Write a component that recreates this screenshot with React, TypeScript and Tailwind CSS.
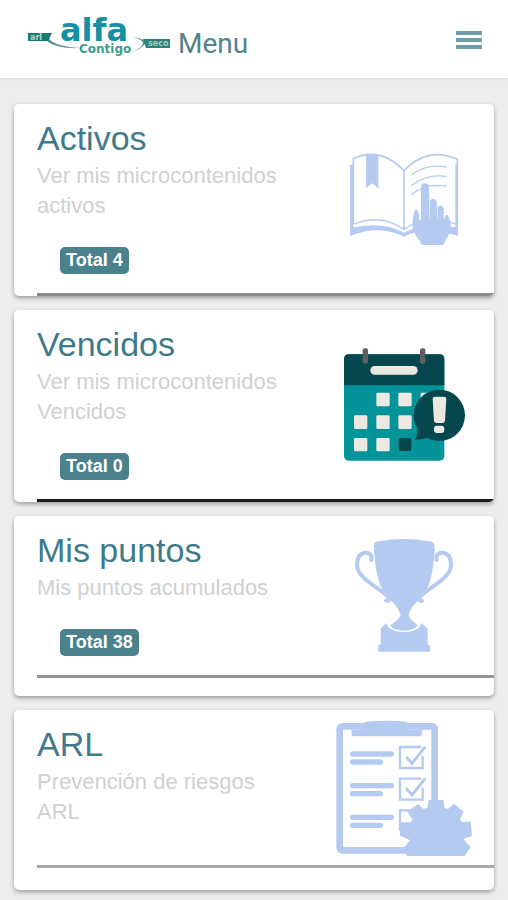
import type { ReactNode } from "react";

function Logo() {
  return (
    <svg viewBox="28 12 142 48" className="h-12 w-[142px] shrink-0" role="img" aria-label="alfa Contigo">
      <path d="M50 33C45 38 52 46 79 48C62 49 46 44 46 38Z" fill="#5f8f8b" />
      <path d="M132 37C142 38 148 41 144 45C140 49 136 51 131 52C138 50 142 47 143 43C142 40 138 38 132 37Z" fill="#5f8f8b" />
      <path d="M28 33H52L48 41H28Z" fill="#1c7a70" />
      <path d="M143 39H170V48H146Z" fill="#2b8378" />
      <text x="30" y="40" fontSize="8" className="font-['DejaVu_Sans',sans-serif] font-bold" fill="#b5d3cf">arl</text>
      <text x="148" y="46" fontSize="8" className="font-['DejaVu_Sans',sans-serif] font-bold" fill="#a3c8c2">seco</text>
      <text className="font-['DejaVu_Sans',sans-serif] font-bold">
        <tspan x="60" y="41" fontSize="32" fill="#138fa6">alfa</tspan>
        <tspan x="79" y="53" fontSize="12" fill="#35a08c">Contigo</tspan>
      </text>
    </svg>
  );
}

function BookIcon() {
  return (
    <svg viewBox="6 -84 432 432" className="h-36 w-36" aria-hidden="true">
      <g fill="none" stroke="#b5caf0" strokeWidth="5">
        <path d="M70 252V56Q150 18 222 92Q294 18 382 58V254" />
        <path d="M222 92V268" />
        <path d="M244 106Q288 70 350 81M244 137Q288 101 350 109M242 165Q286 129 350 138" strokeWidth="4" />
      </g>
      <path d="M60 76L70 72V262Q156 244 222 276Q290 244 376 262V72L384 76V288Q290 256 222 290Q150 252 60 288Z" fill="#b5caf0" />
      <path d="M74 262V254Q150 222 222 270Q290 222 374 254V262Q290 240 222 278Q156 240 74 262Z" fill="#fff" />
      <path d="M74 252Q150 220 222 268Q290 220 376 252" fill="none" stroke="#b5caf0" strokeWidth="4" />
      <path d="M108 44H145V146L127 130L108 145Z" fill="#b5caf0" />
      <path
        d="M273 140Q274 130 285 130Q296 130 297 140L299 236H300V184Q301 177 310 177Q319 178 320 186L322 236H323V202Q325 196 332 196Q340 198 341 206L342 238L347 226Q350 222 355 226L362 252Q362 280 346 302Q342 315 335 315H280Q272 313 269 302Q249 282 247 252Q249 218 256 210Q263 208 265 216L269 240H273Z"
        fill="#b5caf0"
      />
    </svg>
  );
}

function CalendarIcon() {
  return (
    <svg viewBox="6 -51 432 432" className="h-36 w-36" aria-hidden="true">
      <rect x="42" y="58" width="301" height="319" rx="14" fill="#05939a" />
      <path d="M42 151V72Q42 58 56 58H329Q343 58 343 72V151Z" fill="#05474d" />
      <rect x="98" y="40" width="16" height="46" rx="6" fill="#5c5f60" />
      <rect x="270" y="40" width="16" height="46" rx="6" fill="#5c5f60" />
      <rect x="121" y="93" width="142" height="26" rx="13" fill="#ebe9e2" />
      <g fill="#ebe9e2">
        <rect x="139" y="173" width="40" height="41" rx="4" />
        <rect x="205" y="173" width="40" height="41" rx="4" />
        <rect x="272" y="173" width="40" height="41" rx="4" />
        <rect x="72" y="241" width="40" height="41" rx="4" />
        <rect x="139" y="241" width="40" height="41" rx="4" />
        <rect x="205" y="241" width="40" height="41" rx="4" />
        <rect x="72" y="309" width="40" height="40" rx="4" />
        <rect x="139" y="309" width="40" height="40" rx="4" />
      </g>
      <rect x="206" y="309" width="38" height="39" rx="6" fill="#05474d" />
      <path d="M254 314Q264 302 262 282L296 306Q276 316 254 314Z" fill="#05474d" />
      <circle cx="328" cy="241" r="77" fill="#05474d" />
      <path d="M308 192Q308 185 316 185H341Q349 185 349 192L345 257Q344 264 337 264H320Q313 264 312 257Z" fill="#ebe9e2" />
      <rect x="312" y="272" width="31" height="22" rx="9" fill="#ebe9e2" />
    </svg>
  );
}

function TrophyIcon() {
  return (
    <svg viewBox="-24 -18 432 432" className="h-36 w-36" aria-hidden="true">
      <g fill="none" stroke="#b5caf0" strokeWidth="12" strokeLinecap="round">
        <path d="M94 90Q98 67 74 68Q51 71 51 106C54 150 122 172 148 204Q146 214 138 212" />
        <path d="M290 90Q286 67 310 68Q333 71 333 106C330 150 262 172 236 204Q238 214 246 212" />
      </g>
      <path
        d="M102 42Q104 36 116 34Q192 20 268 34Q282 36 283 44L284 64C280 112 274 162 252 192C230 218 210 232 206 256Q210 270 234 286Q222 302 192 302Q160 302 150 286Q176 270 182 256C176 232 158 218 136 192C112 162 106 112 102 64Z"
        fill="#b5caf0"
      />
      <path d="M122 296L138 279L146 292Q160 306 192 306Q226 306 238 292L245 279L263 296V344H270V365H115V344H122Z" fill="#b5caf0" />
    </svg>
  );
}

function ChecklistIcon() {
  return (
    <svg viewBox="36 39 432 432" className="h-36 w-36" aria-hidden="true">
      <rect x="59" y="64" width="285" height="372" rx="8" fill="none" stroke="#b5caf0" strokeWidth="20" />
      <path d="M94 74H134V50Q198 44 262 50V74H308L304 94H96Z" fill="#b5caf0" />
      <g stroke="#b5caf0" strokeWidth="16" strokeLinecap="round">
        <path d="M98 147H214M98 171H181M98 242H214M98 266H181M98 337H214M98 361H181" />
      </g>
      <g fill="none" stroke="#b5caf0" strokeWidth="7">
        <path d="M304 126H240V189H308V152M304 221H240V284H308V248M300 316H240V378" />
        <path d="M258 155L276 175L316 125M258 250L276 270L316 220" strokeWidth="9" />
      </g>
      <path
        d="M326 285H370L373 308L384 312L402 296L431 320L420 342L426 352L452 349L456 392L430 402L452 426L434 453H262L246 434L270 406L240 392V352L270 352L278 344L262 320L294 297L310 312L322 308Z"
        fill="#b5caf0"
      />
    </svg>
  );
}

type CardProps = {
  title: string;
  description: string;
  total?: number;
  icon: ReactNode;
  ruleClass: string;
};

function MenuCard({ title, description, total, icon, ruleClass }: CardProps) {
  return (
    <article className="overflow-hidden rounded-[5px] bg-white pl-[23px] shadow-[0_2px_4px_rgba(0,0,0,0.35)]">
      <div className="flex min-h-[155px] justify-between gap-8 pr-[18px]">
        <div className="min-w-0 flex-1 pt-[11px] pb-[19px]">
          <h2 className="text-[34px] leading-[46px] text-[#3f7a8a]">{title}</h2>
          <p className="text-[22px] leading-[30px] text-[#d0d0d2]">{description}</p>
          {total !== undefined && (
            <span className="mt-[26px] ml-[23px] inline-block rounded-[5px] bg-[#4a818c] px-[6px] text-[18px] leading-[27px] font-bold text-white">
              Total {total}
            </span>
          )}
        </div>
        <div className="shrink-0 pt-2">{icon}</div>
      </div>
      <hr className={ruleClass} />
    </article>
  );
}

export default function App() {
  return (
    <div className="min-h-screen bg-[#ededed] pb-[10px] font-['Liberation_Sans',Arial,sans-serif]">
      <header className="flex h-[78px] items-start bg-white pt-3 pr-[25px] pl-7 shadow-[0_1px_2px_rgba(0,0,0,0.08)]">
        <Logo />
        <h1 className="mt-3 ml-2 font-[Roboto,sans-serif] text-[28px] leading-10 text-[#56828c]">Menu</h1>
        <button type="button" aria-label="Abrir menú" className="mt-[17px] ml-auto">
          <svg viewBox="0 0 28 22" className="h-[22px] w-7" stroke="#6f9fa6" strokeWidth="4">
            <path d="M1 4H27M1 11H27M1 18H27" />
          </svg>
        </button>
      </header>
      <main className="flex flex-col gap-[14px] px-[14px] pt-[26px]">
        <MenuCard title="Activos" description="Ver mis microcontenidos activos" total={4} icon={<BookIcon />} ruleClass="border-t-[3px] border-[#8b8b8b]" />
        <MenuCard title="Vencidos" description="Ver mis microcontenidos Vencidos" total={0} icon={<CalendarIcon />} ruleClass="border-t-[3px] border-[#1b1b1b]" />
        <MenuCard title="Mis puntos" description="Mis puntos acumulados" total={38} icon={<TrophyIcon />} ruleClass="mb-[18px] border-t-[3px] border-[#949494]" />
        <MenuCard title="ARL" description="Prevención de riesgos ARL" icon={<ChecklistIcon />} ruleClass="mb-[22px] border-t-[3px] border-[#a8a8a8]" />
      </main>
    </div>
  );
}
